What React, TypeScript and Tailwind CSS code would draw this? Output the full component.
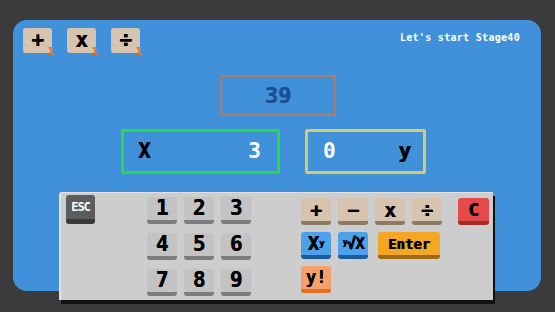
import React from "react";

const pixel = { fontFamily: '"DejaVu Sans Mono", "Liberation Mono", monospace' };

const TopKey = ({ label }: { label: string }) => (
  <div className="relative flex h-[25px] w-[29px] items-center justify-center rounded-[3px] bg-[#d6c4b0] text-[21px] font-bold leading-none text-black [text-shadow:0.6px_0_0_#000]">
    {label}
    <span className="absolute -bottom-[4px] -right-[2px] text-[11px] font-bold leading-none text-[#ee6a1c] [text-shadow:none]">
      1
    </span>
  </div>
);

type KeyProps = {
  label: React.ReactNode;
  face: string;
  edge: string;
  w?: string;
  text?: string;
  size?: string;
};

const Key = ({ label, face, edge, w = "w-[30px]", text = "text-black", size = "text-[19px]" }: KeyProps) => (
  <div
    className={`flex h-[27px] ${w} items-center justify-center rounded-[3px] border-b-[4px] font-bold leading-none [text-shadow:0.6px_0_0_#000] ${face} ${edge} ${text} ${size}`}
  >
    {label}
  </div>
);

const numKey = (n: string) => (
  <Key key={n} label={n} face="bg-[#c3c3c3]" edge="border-[#7c7c7c]" size="text-[21px]" />
);

const opKey = (k: string) => (
  <Key key={k} label={k} face="bg-[#d6c4b0]" edge="border-[#8c7b68]" size="text-[20px]" />
);

export default function App() {
  return (
    <div className="h-[312px] w-[555px] overflow-hidden bg-[#3b3b3b] pl-[13px] pt-[20px]" style={pixel}>
      <div className="flex h-[271px] w-[528px] flex-col rounded-[14px] bg-[#4190da]">
        <div className="mt-[8px] flex h-[25px] shrink-0 items-center justify-between pl-[10px] pr-[21px]">
          <div className="flex gap-[15px]">
            <TopKey label="+" />
            <TopKey label="x" />
            <TopKey label="÷" />
          </div>
          <span className="-mt-[6px] text-[10px] font-bold tracking-[0.3px] text-white">Let's start Stage40</span>
        </div>

        <div className="ml-[207px] mt-[22px] flex h-[41px] w-[116px] shrink-0 items-center justify-center border-2 border-[#b07c66] text-[22px] font-bold text-[#1b4f8f] [text-shadow:0.6px_0_0_#1b4f8f]">
          39
        </div>

        <div className="ml-[108px] mt-[13px] flex h-[45px] shrink-0 gap-[25px]">
          <div className="flex h-[45px] w-[159px] items-center justify-between rounded-[2px] border-[3px] border-[#22dd44] pl-[14px] pr-[16px] text-[21px] font-bold">
            <span className="text-black [text-shadow:0.6px_0_0_#000]">X</span>
            <span className="text-white">3</span>
          </div>
          <div className="flex h-[45px] w-[121px] items-center justify-between rounded-[2px] border-[3px] border-[#d8cc66] pl-[15px] pr-[12px] text-[21px] font-bold">
            <span className="text-white">0</span>
            <span className="text-black [text-shadow:0.6px_0_0_#000]">y</span>
          </div>
        </div>

        <div className="ml-[46px] mt-[18px] flex h-[108px] w-[434px] shrink-0 items-start rounded-tl-[3px] border-l-2 border-t border-[#e2e2e2] bg-[#cdcdcd] shadow-[2px_4px_0_#111]">
          <div className="ml-[5px] mt-[2px] flex h-[29px] w-[29px] items-center justify-center rounded-[3px] border-b-[5px] border-[#3a3a3a] bg-[#5c5c5c] text-[12px] font-bold leading-none tracking-[-1px] text-white">
            ESC
          </div>

          <div className="ml-[52px] mt-[4px] grid grid-cols-3 gap-x-[7px] gap-y-[9px]">
            {["1", "2", "3", "4", "5", "6", "7", "8", "9"].map(numKey)}
          </div>

          <div className="ml-[50px] mt-[5px] flex flex-col gap-[7px]">
            <div className="flex gap-[7px]">{["+", "−", "x", "÷"].map(opKey)}</div>
            <div className="flex gap-[7px]">
              <Key
                label={
                  <span>
                    X<sup className="text-[9px]">y</sup>
                  </span>
                }
                face="bg-[#4da0ec]"
                edge="border-[#1d5c9c]"
              />
              <Key
                label={
                  <span className="tracking-[-1px]">
                    <sup className="text-[8px]">y</sup>√X
                  </span>
                }
                face="bg-[#4da0ec]"
                edge="border-[#1d5c9c]"
                size="text-[16px]"
              />
              <Key
                label="Enter"
                face="bg-[#f5a623]"
                edge="border-[#9c6a14]"
                w="w-[62px] ml-[3px]"
                size="text-[14px]"
              />
            </div>
            <div className="flex">
              <Key label="y!" face="bg-[#f7a06a]" edge="border-[#e2701e]" size="text-[17px]" />
            </div>
          </div>

          <div className="ml-[16px] mt-[5px]">
            <Key label="C" face="bg-[#e44a4a]" edge="border-[#a42a2a]" w="w-[31px]" size="text-[18px]" />
          </div>
        </div>
      </div>
    </div>
  );
}
